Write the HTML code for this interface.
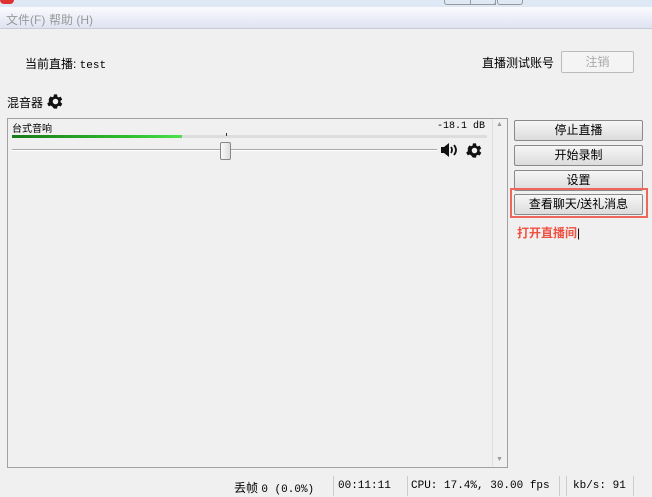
<!DOCTYPE html><html><head><style>
body{margin:0;width:652px;height:497px;background:#f0f0f0;position:relative;overflow:hidden;font-family:"Liberation Sans","Noto Sans CJK SC",sans-serif;font-size:12px;color:#000}
.a{position:absolute;white-space:nowrap}
.btn{position:absolute;left:514px;width:127px;height:19px;border:1px solid #8a8a8a;border-radius:2px;background:linear-gradient(#f6f6f6,#dcdcdc);text-align:center;line-height:19px;font-size:12px}
.mono{font-family:"Liberation Mono","Noto Sans CJK SC",monospace;font-size:11px}
</style></head><body>
<div class="a" style="left:0;top:0;width:652px;height:7px;background:#dfe8f5"></div>
<div class="a" style="left:0;top:0;width:14px;height:4px;background:#d33;border-radius:0 0 4px 4px"></div>
<div class="a" style="left:444px;top:0;width:50px;height:4px;border:1px solid #999;border-top:0;border-radius:0 0 3px 3px"></div>
<div class="a" style="left:470px;top:0;width:24px;height:4px;border:1px solid #999;border-top:0"></div>
<div class="a" style="left:497px;top:0;width:24px;height:4px;border:1px solid #999;border-top:0;border-radius:0 0 3px 3px"></div>
<div class="a" style="left:0;top:7px;width:652px;height:21px;background:linear-gradient(#fafbfe,#dfe3f2);border-bottom:1px solid #c8cbd6"></div>
<div class="a" style="left:6px;top:11px;color:#999;font-size:12px">文件(F)</div>
<div class="a" style="left:49px;top:11px;color:#999;font-size:12px">帮助 (H)</div>
<div class="a" style="left:25px;top:55px;font-size:12px">当前直播: <span class="mono">test</span></div>
<div class="a" style="left:482px;top:54px;font-size:12px">直播测试账号</div>
<div class="a" style="left:561px;top:51px;width:71px;height:20px;border:1px solid #bbb;border-radius:2px;background:#f4f4f4;color:#aaa;text-align:center;line-height:20px">注销</div>
<div class="a" style="left:7px;top:94px;font-size:12px">混音器</div>
<svg class="a" style="left:46px;top:92px" width="19" height="19" viewBox="0 0 24 24"><path fill="#111" d="M19.4 13a7.5 7.5 0 0 0 0-2l2.1-1.6-2-3.5-2.5 1a7.6 7.6 0 0 0-1.7-1L15 3h-4l-.4 2.7a7.6 7.6 0 0 0-1.7 1l-2.5-1-2 3.5L4.6 11a7.5 7.5 0 0 0 0 2l-2.1 1.6 2 3.5 2.5-1a7.6 7.6 0 0 0 1.7 1L11 21h4l.4-2.7a7.6 7.6 0 0 0 1.7-1l2.5 1 2-3.5zM13 15.5a3.5 3.5 0 1 1 0-7 3.5 3.5 0 0 1 0 7z" transform="translate(-1 0)"/></svg>
<div class="a" style="left:7px;top:118px;width:499px;height:348px;border:1px solid #a0a0a0;background:#f0f0f0"></div>
<div class="a" style="left:492px;top:119px;width:14px;height:347px;border-left:1px solid #ddd"></div>
<div class="a" style="left:496px;top:121px;color:#999;font-size:7px">▲</div>
<div class="a" style="left:496px;top:456px;color:#999;font-size:7px">▼</div>
<div class="a" style="left:12px;top:120px;font-size:10px">台式音响</div>
<div class="a mono" style="left:437px;top:121px;font-size:10px">-18.1 dB</div>
<div class="a" style="left:12px;top:135px;width:475px;height:3px;background:#ddd"></div>
<div class="a" style="left:12px;top:135px;width:170px;height:3px;background:linear-gradient(90deg,#1a7a1a,#2fbf2f 70%,#4ee04e)"></div>
<div class="a" style="left:226px;top:133px;width:1px;height:3px;background:#333"></div>
<div class="a" style="left:12px;top:149px;width:425px;height:1px;background:#aaa;border-bottom:1px solid #fff"></div>
<div class="a" style="left:220px;top:142px;width:9px;height:16px;border:1px solid #888;border-radius:2px;background:linear-gradient(90deg,#fafafa,#ddd)"></div>
<svg class="a" style="left:441px;top:143px" width="18" height="14" viewBox="0 0 18 14"><path d="M0 4h3l5-4v14l-5-4H0z" fill="#111"/><path d="M10 4q2 3 0 6M13 2q4 5 0 10" stroke="#111" stroke-width="1.8" fill="none"/></svg>
<svg class="a" style="left:465px;top:141px" width="19" height="19" viewBox="0 0 24 24"><path fill="#111" d="M19.4 13a7.5 7.5 0 0 0 0-2l2.1-1.6-2-3.5-2.5 1a7.6 7.6 0 0 0-1.7-1L15 3h-4l-.4 2.7a7.6 7.6 0 0 0-1.7 1l-2.5-1-2 3.5L4.6 11a7.5 7.5 0 0 0 0 2l-2.1 1.6 2 3.5 2.5-1a7.6 7.6 0 0 0 1.7 1L11 21h4l.4-2.7a7.6 7.6 0 0 0 1.7-1l2.5 1 2-3.5zM13 15.5a3.5 3.5 0 1 1 0-7 3.5 3.5 0 0 1 0 7z" transform="translate(-1 0)"/></svg>
<div class="btn" style="top:120px">停止直播</div>
<div class="btn" style="top:145px">开始录制</div>
<div class="btn" style="top:170px">设置</div>
<div class="a" style="left:510px;top:188px;width:138px;height:30px;border:2px solid #f0665a;box-sizing:border-box"></div>
<div class="btn" style="top:194px">查看聊天/送礼消息</div>
<div class="a" style="left:517px;top:224px;color:#f05040;font-weight:bold;font-size:12px">打开直播间<span style="color:#000;font-weight:normal">|</span></div>
<div class="a" style="left:234px;top:479px;font-size:12px">丢帧 <span class="mono">0 (0.0%)</span></div>
<div class="a" style="left:333px;top:476px;width:1px;height:20px;background:#ccc"></div>
<div class="a mono" style="left:338px;top:480px">00:11:11</div>
<div class="a" style="left:407px;top:476px;width:1px;height:20px;background:#ccc"></div>
<div class="a mono" style="left:411px;top:480px">CPU: 17.4%, 30.00 fps</div>
<div class="a" style="left:559px;top:476px;width:1px;height:20px;background:#ccc"></div>
<div class="a" style="left:566px;top:476px;width:1px;height:20px;background:#ccc"></div>
<div class="a mono" style="left:573px;top:480px">kb/s: 91</div>
<div class="a" style="left:633px;top:476px;width:1px;height:20px;background:#ccc"></div>
</body></html>
